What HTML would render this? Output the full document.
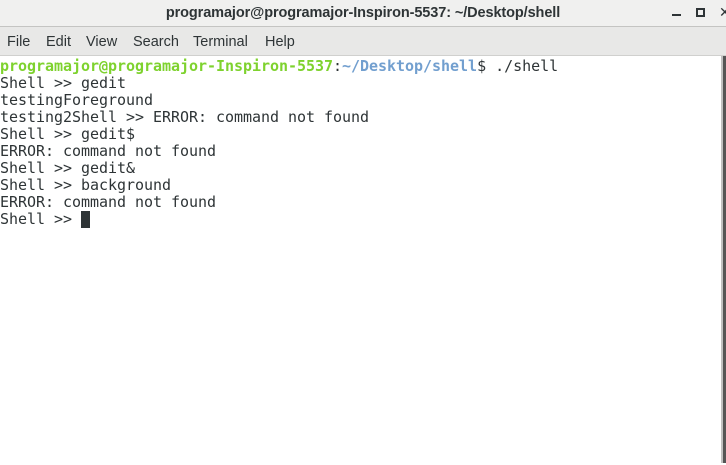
<!DOCTYPE html>
<html><head><style>
body{margin:0;width:726px;height:465px;overflow:hidden;background:#fff;font-family:"Liberation Sans",sans-serif;position:relative}
#title{position:absolute;left:0;top:0;width:726px;height:26px;background:#f0f0ef;border-bottom:1px solid #c4c4c2;text-align:center;font:bold 14.5px/26px "Liberation Sans",sans-serif;color:#2e3436;letter-spacing:-0.1px}
#menu{position:absolute;left:0;top:27px;width:726px;height:28px;background:#e8e8e7;border-bottom:1px solid #d0d0ce;font-size:14.5px;line-height:31px;color:#2e3436}
#menu span{position:absolute;top:0}
#term{position:absolute;left:0;top:58px;font:15px/17px "DejaVu Sans Mono",monospace;color:#2e3436;white-space:pre;letter-spacing:-0.03px}
.g{color:#7ed22e;font-weight:bold}.b{color:#729fcf;font-weight:bold}
.cur{display:inline-block;width:9px;height:17px;background:#2e3436;vertical-align:top}
#sb1{position:absolute;left:721px;top:56px;width:2px;height:407px;background:#c0c0c0}
#sb2{position:absolute;left:723px;top:56px;width:3px;height:407px;background:#555}
</style></head><body>
<div id="title">programajor@programajor-Inspiron-5537: ~/Desktop/shell</div>
<div style="position:absolute;left:672px;top:14px;width:9px;height:2px;background:#2e3436"></div>
<div style="position:absolute;left:696px;top:8px;width:5px;height:5px;border:2px solid #2e3436"></div>
<div style="position:absolute;left:719px;top:5px;font:bold 14px 'DejaVu Sans';color:#2e3436">✕</div>
<div id="menu"><span style="left:7px">File</span><span style="left:46px">Edit</span><span style="left:86px">View</span><span style="left:133px">Search</span><span style="left:193px">Terminal</span><span style="left:265px">Help</span></div>
<div id="term"><span class="g">programajor@programajor-Inspiron-5537</span>:<span class="b">~/Desktop/shell</span>$ ./shell
Shell &gt;&gt; gedit
testingForeground
testing2Shell &gt;&gt; ERROR: command not found
Shell &gt;&gt; gedit$
ERROR: command not found
Shell &gt;&gt; gedit&amp;
Shell &gt;&gt; background
ERROR: command not found
Shell &gt;&gt; <span class="cur"></span></div>
<div id="sb1"></div><div id="sb2"></div>
</body></html>
